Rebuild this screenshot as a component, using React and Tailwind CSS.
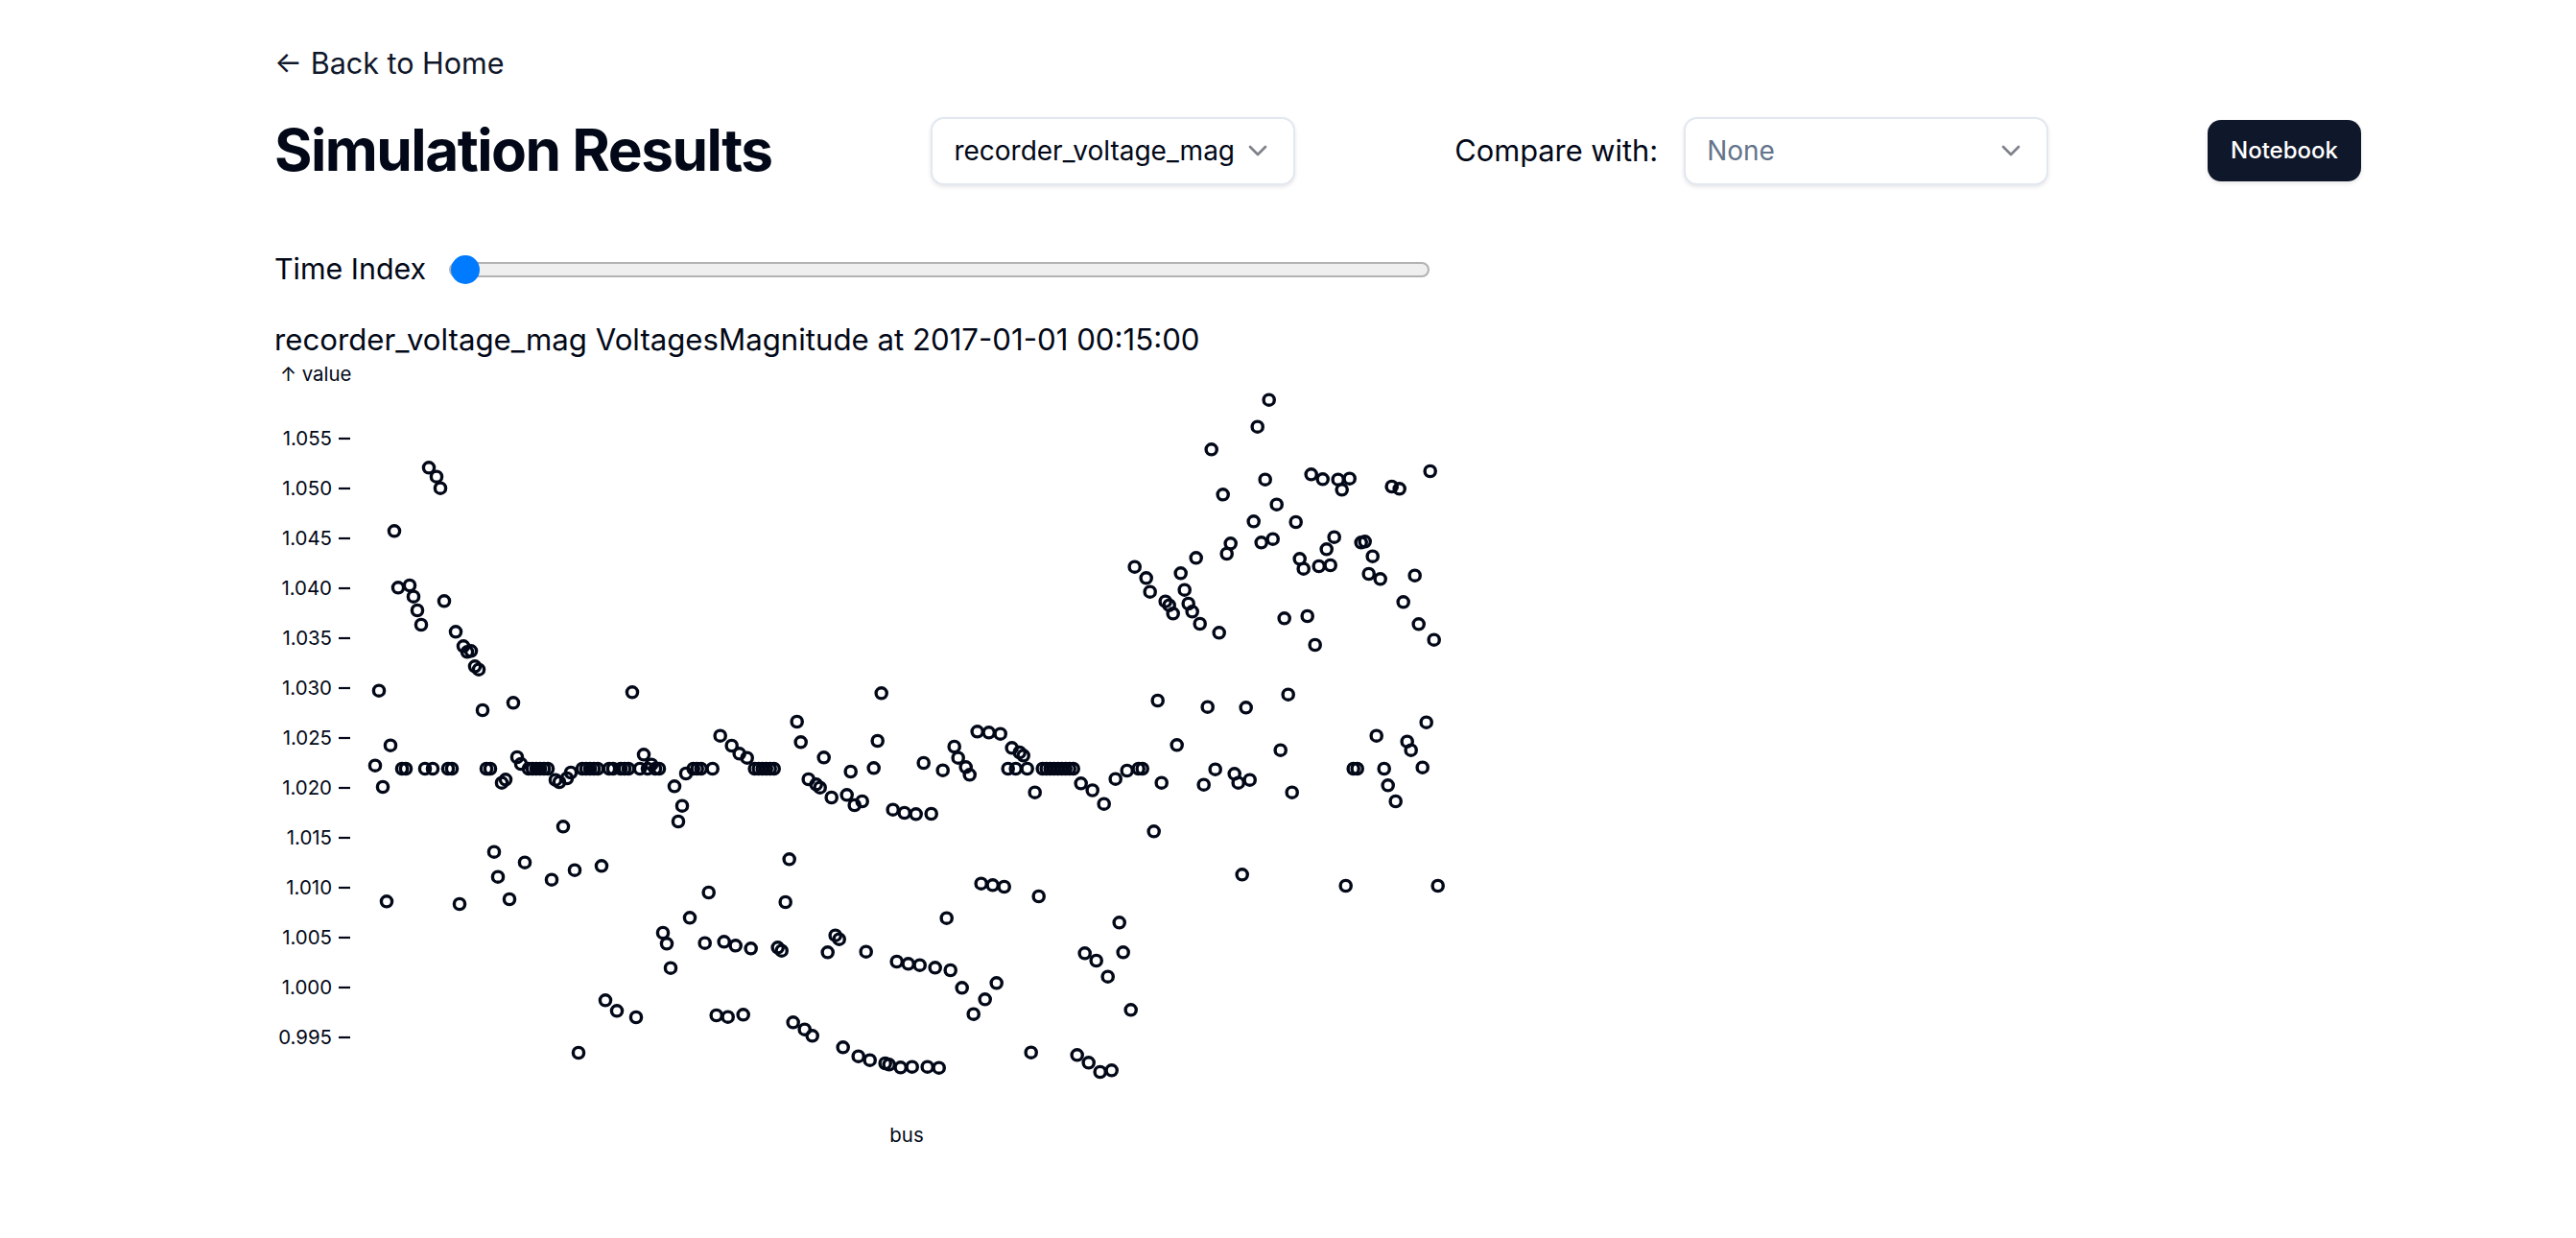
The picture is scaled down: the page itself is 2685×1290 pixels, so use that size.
import { ChevronDown } from 'lucide-react';

const Y_TICKS = ['1.055', '1.050', '1.045', '1.040', '1.035', '1.030', '1.025', '1.020', '1.015', '1.010', '1.005', '1.000', '0.995'];

// Dots that all sit on the 1.022 line
const FLAT_ROW = [
  419, 423, 443, 451, 467, 471, 507, 511, 551, 555, 559, 563, 567, 571, 607, 611, 615, 619, 623, 635, 639, 647, 651, 655,
  667, 675, 683, 687, 722.7, 726.7, 730.7, 742.7, 786.7, 790.7, 794.7, 798.7, 802.7, 806.7, 1050.7, 1058.7, 1070.7,
  1086.7, 1090.7, 1094.7, 1098.7, 1102.7, 1106.7, 1110.7, 1114.7, 1118.7, 1186.7, 1190.7, 1410.7, 1414.7, 1442.7,
];

const DOTS = [
  [447, 487.3], [455, 496.7], [459, 508.7], [411, 553.3], [415, 612.3], [427, 610], [431, 621.7], [435, 636], [439, 651],
  [463, 626.3], [475, 658.3], [483, 673.3], [487, 679.3], [491, 678.3], [495, 694.3], [499, 697.7], [395, 719.7],
  [659, 721.3], [503, 740], [535, 732.3], [407, 776.7], [539, 789], [543, 796], [391, 797.7], [671, 786.3], [679, 796.7],
  [399, 820], [523, 815.7], [527, 812.3], [579, 812.7], [583, 815], [591, 811], [595, 805], [703, 819.3], [715, 806],
  [711, 839.7], [707, 856], [587, 861.3], [515, 887.7], [547, 898.7], [627, 902.3], [599, 906.7], [519, 913.7], [575, 916.7],
  [531, 937], [403, 939.3], [479, 942], [719, 956.3], [691, 972], [695, 983.3], [699, 1008.7], [631, 1042.3], [643, 1053.3],
  [663, 1060], [603, 1097],
  [918.7, 722.3], [830.7, 752], [834.7, 773.3], [750.7, 766.7], [762.7, 777], [770.7, 785.3], [778.7, 789.7], [914.7, 772],
  [858.7, 789.3], [962.7, 795], [994.7, 778], [998.7, 789.7], [1006.7, 799.3], [1010.7, 807.3], [1018.7, 762.3],
  [1030.7, 763.3], [1042.7, 764.7], [1054.7, 779.3], [1062.7, 784], [1066.7, 787.3], [982.7, 802.7], [910.7, 800.3],
  [886.7, 804], [842.7, 812], [850.7, 817.3], [854.7, 820.7], [866.7, 831], [882.7, 828.3], [890.7, 839], [898.7, 835],
  [930.7, 843.7], [942.7, 847], [954.7, 848.3], [970.7, 848], [1078.7, 825.7], [1126.7, 816.3], [1138.7, 823.5],
  [1150.7, 837.7], [822.7, 895.3],
  [1322.7, 416.7], [1310.7, 444.7], [1262.7, 468.3], [1366.7, 494.3], [1378.7, 499.3], [1394.7, 499.7], [1406.7, 498.7],
  [1398.7, 510.3], [1450.7, 507], [1458.7, 509.3], [1490.7, 491], [1318.7, 499.7], [1274.7, 515.3], [1330.7, 525.7],
  [1306.7, 543.3], [1350.7, 544], [1390.7, 559.7], [1326.7, 561.7], [1314.7, 565.3], [1282.7, 566.3], [1278.7, 577],
  [1246.7, 581.3], [1418.7, 565.3], [1422.7, 564.3], [1382.7, 572.3], [1430.7, 579.7], [1354.7, 582.3], [1358.7, 592.7],
  [1374.7, 590], [1386.7, 589], [1182.7, 590.7], [1194.7, 602.3], [1230.7, 597.3], [1198.7, 616.7], [1234.7, 614.7],
  [1426.7, 598], [1438.7, 603.3], [1474.7, 599.7], [1214.7, 626.7], [1218.7, 630.7], [1222.7, 639.3], [1238.7, 629],
  [1242.7, 637.3], [1250.7, 650], [1270.7, 659.3], [1338.7, 644.3], [1362.7, 642], [1370.7, 672], [1462.7, 627.3],
  [1478.7, 650.3], [1494.7, 666.7],
  [1206.7, 730], [1258.7, 736.7], [1298.7, 737.3], [1342.7, 723.7], [1486.7, 752.7], [1434.7, 766.7], [1466.7, 772.7],
  [1470.7, 781.7], [1226.7, 776.3], [1334.7, 781.7], [1482.7, 799.7], [1266.7, 801.7], [1286.7, 806.3], [1302.7, 812.7],
  [1290.7, 815.7], [1254.7, 817.7], [1210.7, 815.7], [1174.7, 803], [1162.7, 811.7], [1346.7, 825.7], [1446.7, 818.3],
  [1454.7, 835], [1202.7, 866.3], [1294.7, 911.3], [1402.7, 923], [1498.7, 923],
  [738.7, 930], [818.7, 940], [1022.7, 920.7], [1034.7, 922.3], [1046.7, 924], [1082.7, 934], [986.7, 956.7], [734.7, 982.7],
  [754.7, 981.3], [766.7, 985.3], [782.7, 988.3], [810.7, 987.3], [814.7, 990.7], [870.7, 974.7], [874.7, 978.7], [862.7, 992.3],
  [902.7, 991.7], [934.7, 1002], [946.7, 1004.3], [958.7, 1005.7], [974.7, 1008.3], [990.7, 1011], [1002.7, 1029.3],
  [1038.7, 1024.3], [1026.7, 1041.3], [1014.7, 1056.7], [1130.7, 993.3], [1142.7, 1001], [1154.7, 1017.7], [746.7, 1058],
  [758.7, 1059.7], [774.7, 1057.3], [826.7, 1065.3], [838.7, 1072.7], [846.7, 1079.3], [878.7, 1091.3], [894.7, 1100.7],
  [906.7, 1104.7], [922.7, 1108], [926.7, 1109.3], [938.7, 1112.3], [950.7, 1111.7], [966.7, 1111.7], [978.7, 1112.7],
  [1074.7, 1096.7], [1122.7, 1099.3], [1134.7, 1107.3], [1146.7, 1117], [1166.7, 961.3], [1170.7, 992.3], [1178.7, 1052.3],
  [1158.7, 1115.3],
  ...FLAT_ROW.map(x => [x, 801]),
];

function SelectBox({ value, muted }) {
  return (
    <button className="flex h-[71px] w-[380px] items-center justify-between rounded-[14px] border-2 border-[#e2e8f0] bg-white pl-[22px] pr-[21px] shadow-[0_2px_4px_rgba(0,0,0,0.1)]">
      <span className={`text-[28px] ${muted ? 'text-[#64748b]' : ''}`}>{value}</span>
      <ChevronDown size={32} strokeWidth={2} className="opacity-50" />
    </button>
  );
}

function VoltageChart() {
  return (
    <svg viewBox="286 375 1240 860" className="block h-[860px] w-[1240px] fill-current text-[20.4px]">
      <text x="292" y="397">↑ value</text>
      {Y_TICKS.map((label, i) => {
        const y = 457 + i * 52;
        return (
          <g key={label}>
            <line x1="353" x2="365" y1={y} y2={y} stroke="currentColor" strokeWidth="2.2" />
            <text x="346" y={y + 7} textAnchor="end">{label}</text>
          </g>
        );
      })}
      <g fill="none" stroke="currentColor" strokeWidth="3.4">
        {DOTS.map(([cx, cy], i) => (
          <circle key={i} cx={cx} cy={cy} r="5.6" />
        ))}
      </g>
      <text x="945" y="1190" textAnchor="middle">bus</text>
    </svg>
  );
}

export default function App() {
  return (
    <div className="min-h-screen bg-white font-[family-name:Inter,sans-serif] text-[#020817]">
      <div className="ml-[286px] w-[2175px] pt-[46px]">
        <a className="flex h-[40px] items-center text-[30.5px] text-[#0f172a]">← Back to Home</a>

        {/* Header */}
        <div className="mt-[35px] flex h-[72px] items-center justify-between">
          <h1 className="text-[60.3px] font-bold tracking-tight">Simulation Results</h1>
          <SelectBox value="recorder_voltage_mag" />
          <div className="flex items-center gap-[27px]">
            <span className="text-[30.8px]">Compare with:</span>
            <SelectBox value="None" muted />
          </div>
          <button className="h-[64px] w-[160px] rounded-[14px] bg-[#0f172a] text-[24px] font-medium text-white shadow-[0_2px_4px_rgba(0,0,0,0.1)]">
            Notebook
          </button>
        </div>

        {/* Slider */}
        <div className="mt-[68px] flex h-[40px] items-center">
          <label className="w-[182px] text-[30.4px]">Time Index</label>
          <input
            type="range"
            min="0"
            max="95"
            defaultValue="0"
            className="h-[30px] w-[1022px] appearance-none bg-transparent [&::-webkit-slider-runnable-track]:h-[15.5px] [&::-webkit-slider-runnable-track]:rounded-full [&::-webkit-slider-runnable-track]:border-2 [&::-webkit-slider-runnable-track]:border-[#b2b2b2] [&::-webkit-slider-runnable-track]:bg-[#efefef] [&::-webkit-slider-thumb]:mt-[-9px] [&::-webkit-slider-thumb]:h-[30px] [&::-webkit-slider-thumb]:w-[30px] [&::-webkit-slider-thumb]:appearance-none [&::-webkit-slider-thumb]:rounded-full [&::-webkit-slider-thumb]:bg-[#007aff]"
          />
        </div>

        <h2 className="mt-[33px] flex h-[41px] items-center text-[31.2px]">
          recorder_voltage_mag VoltagesMagnitude at 2017-01-01 00:15:00
        </h2>

        <VoltageChart />
      </div>
    </div>
  );
}
